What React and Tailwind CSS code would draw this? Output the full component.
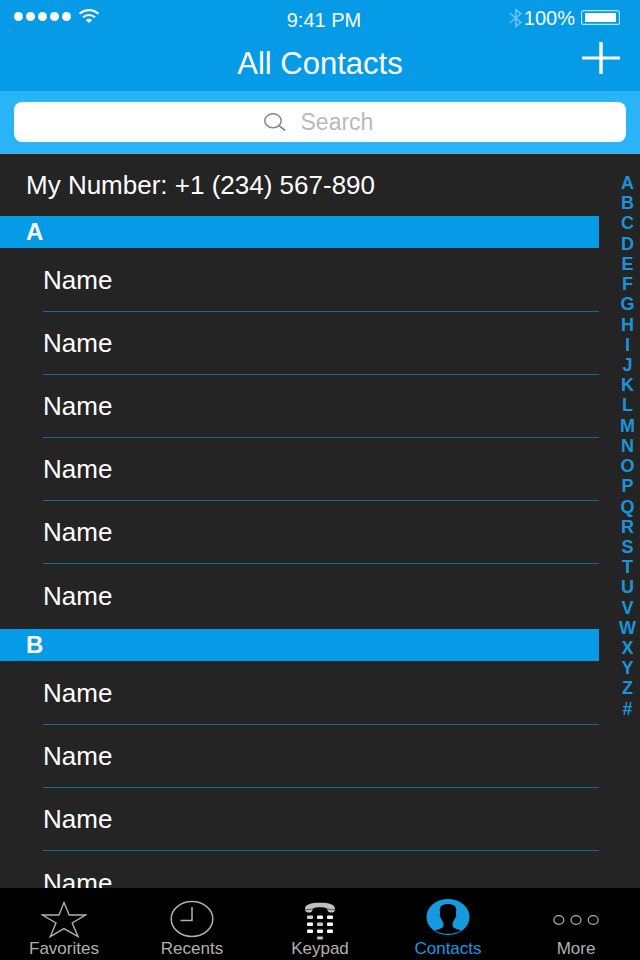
const LETTERS = "ABCDEFGHIJKLMNOPQRSTUVWXYZ#".split("");

const SECTIONS = [
  { letter: "A", contacts: ["Name", "Name", "Name", "Name", "Name", "Name"] },
  { letter: "B", contacts: ["Name", "Name", "Name", "Name"] },
];

/* ICONS */
function WifiIcon() {
  return (
    <svg width="20" height="14" viewBox="0 0 20 14" fill="none" aria-hidden="true">
      <path d="M0.6 4.8C6 -0.1 14 -0.1 19.4 4.8" stroke="currentColor" strokeWidth="2.2" />
      <path d="M4 8.3C7.4 5.2 12.6 5.2 16 8.3" stroke="currentColor" strokeWidth="2.2" />
      <path d="M6.8 11C8.6 9.2 11.4 9.2 13.2 11L10 14Z" fill="currentColor" />
    </svg>
  );
}

function BluetoothIcon() {
  return (
    <svg width="13" height="20" viewBox="0 0 13 20" fill="none" aria-hidden="true">
      <path
        d="M0.8 5.2L12 14.4L6.8 18.4V1.6L12 5.6L0.8 14.8"
        stroke="currentColor"
        strokeWidth="1.6"
      />
    </svg>
  );
}

function BatteryIcon() {
  return (
    <svg width="39" height="15" viewBox="0 0 39 15" fill="none" aria-hidden="true">
      <rect x="0.6" y="0.6" width="37.8" height="13.8" rx="2" stroke="#b3e5fc" strokeWidth="1.1" />
      <rect x="4" y="3" width="31" height="9" fill="white" />
    </svg>
  );
}

function SearchIcon() {
  return (
    <svg width="22" height="18" viewBox="0 0 22 18" fill="none" className="shrink-0" aria-hidden="true">
      <ellipse cx="9" cy="7.7" rx="8.2" ry="7" stroke="currentColor" strokeWidth="1.5" />
      <path d="M14.6 12.4L21.2 17.5" stroke="currentColor" strokeWidth="1.8" />
    </svg>
  );
}

function StarIcon() {
  return (
    <svg width="46" height="38" viewBox="0 0 46 38" fill="none" aria-hidden="true">
      <path
        d="M23 2.5L28.2 15H44.5L31.2 23L37 36.6L23 28.6L9.3 36.6L15 23L1.5 15H18Z"
        stroke="currentColor"
        strokeWidth="1.4"
      />
    </svg>
  );
}

function ClockIcon() {
  return (
    <svg width="44" height="38" viewBox="0 0 44 38" fill="none" aria-hidden="true">
      <ellipse cx="22" cy="19" rx="20.8" ry="17.4" stroke="currentColor" strokeWidth="1.5" />
      <path d="M22 7V20.5H10.5" stroke="currentColor" strokeWidth="1.5" />
    </svg>
  );
}

function KeypadIcon() {
  return (
    <svg
      width="32"
      height="38"
      viewBox="0 0 32 38"
      fill="none"
      className="overflow-visible"
      aria-hidden="true"
    >
      <path
        d="M1 8.4C1.6 4.6 6 2.8 16 2.8S30.4 4.6 31 8.4C31.3 11.4 29.6 12.6 26.8 12.6C24.2 12.6 23.4 11.4 23.2 8.6C20 6.9 12 6.9 8.8 8.6C8.6 11.4 7.8 12.6 5.2 12.6C2.4 12.6 0.7 11.4 1 8.4Z"
        fill="#c0c0c0"
      />
      <path d="M1 9.8L8.8 9.2M31 9.8L23.2 9.2" stroke="#444" strokeWidth="0.8" />
      <g fill="white">
        <rect x="3" y="15.5" width="6" height="3.4" rx="1" fill="#d0d0d0" />
        <rect x="13" y="15.5" width="6" height="3.4" rx="1" />
        <rect x="23" y="15.5" width="6" height="3.4" rx="1" />
        <rect x="3" y="22.5" width="6" height="3.4" rx="1" />
        <rect x="13" y="22.5" width="6" height="3.4" rx="1" fill="#c4c4c4" />
        <rect x="23" y="22.5" width="6" height="3.4" rx="1" />
        <rect x="3" y="29.5" width="6" height="3.4" rx="1" />
        <rect x="13" y="29.5" width="6" height="3.4" rx="1" />
        <rect x="23" y="29.5" width="6" height="3.4" rx="1" />
        <rect x="13" y="36.5" width="6" height="3" rx="1" fill="#c4c4c4" />
      </g>
    </svg>
  );
}

function PersonIcon() {
  return (
    <svg
      width="44"
      height="38"
      viewBox="0 0 44 38"
      fill="none"
      className="overflow-visible"
      aria-hidden="true"
    >
      <ellipse cx="22" cy="17" rx="21.5" ry="18" fill="currentColor" />
      <path
        d="M22 4C16.5 4 13.8 6.2 13.8 10C13.8 11.6 14.1 12.8 14 14C13.3 15.2 14 17.6 15.2 18.2C15.7 20.2 16.6 21.6 17.4 22.6V26.2C16.4 28.6 12.4 29 9 30.4C16 35 28 35 35 30.4C31.6 29 27.6 28.6 26.6 26.2V22.6C27.4 21.6 28.3 20.2 28.8 18.2C30 17.6 30.7 15.2 30 14C29.9 12.8 30.2 11.6 30.2 10C30.2 6.2 27.5 4 22 4Z"
        fill="black"
      />
    </svg>
  );
}

function MoreIcon() {
  return (
    <svg width="46" height="38" viewBox="0 0 46 38" fill="none" aria-hidden="true">
      <g stroke="currentColor" strokeWidth="1.2">
        <ellipse cx="5.8" cy="20" rx="5" ry="4.3" />
        <ellipse cx="23" cy="20" rx="5" ry="4.3" />
        <ellipse cx="40.2" cy="20" rx="5" ry="4.3" />
      </g>
    </svg>
  );
}

const TABS = [
  { label: "Favorites", icon: StarIcon },
  { label: "Recents", icon: ClockIcon },
  { label: "Keypad", icon: KeypadIcon },
  { label: "Contacts", icon: PersonIcon, active: true },
  { label: "More", icon: MoreIcon },
];

function StatusBar() {
  return (
    <div className="grid h-9 grid-cols-[1fr_auto_1fr] items-start px-3.5 pt-1 text-xl leading-6 text-white">
      <div className="flex h-6 items-center gap-2">
        <div className="flex gap-[3px]">
          {[1, 2, 3, 4, 5].map((dot) => (
            <span key={dot} className="size-[9px] rounded-full bg-white" />
          ))}
        </div>
        <WifiIcon />
      </div>
      <p className="pt-1 pl-2">9:41 PM</p>
      <div className="flex h-[27px] items-center justify-end pr-1.5">
        <span className="text-[#64c3f5]">
          <BluetoothIcon />
        </span>
        <span className="pl-0.5 pr-1.5">100%</span>
        <BatteryIcon />
      </div>
    </div>
  );
}

function ContactSection({ section }) {
  return (
    <section>
      <h2 className="h-8 bg-[#059be7] pl-[26px] text-2xl leading-8 font-bold text-white">
        {section.letter}
      </h2>
      <ul className="pt-px pb-0.5 pl-[43px]">
        {section.contacts.map((name, i) => (
          <li
            key={i}
            className="flex h-[63px] items-center border-b border-[#12699b] text-[26px] leading-8 last:border-b-0"
          >
            {name}
          </li>
        ))}
      </ul>
    </section>
  );
}

export default function App() {
  return (
    <div className="flex h-screen flex-col bg-[#242424] font-['Liberation_Sans',Arial,sans-serif] text-white">
      {/* HEADER */}
      <header className="bg-[#059be7]">
        <StatusBar />
        <div className="grid h-[55px] grid-cols-[1fr_auto_1fr] items-center px-5">
          <h1 className="col-start-2 text-[31px] leading-9">All Contacts</h1>
          <button type="button" aria-label="Add contact" className="mb-3 justify-self-end">
            <svg width="38" height="32" viewBox="0 0 38 32" aria-hidden="true">
              <path d="M0 16H38" stroke="white" strokeWidth="3" />
              <path d="M19 0V32" stroke="white" strokeWidth="3.4" />
            </svg>
          </button>
        </div>
      </header>

      {/* SEARCH */}
      <div className="border-b border-[#6fa9c6] bg-[#29b4f7] px-3.5 py-[11px]">
        <label className="flex h-10 items-center justify-center gap-[15px] rounded-lg bg-white text-[#86868b]">
          <SearchIcon />
          <input
            type="text"
            aria-label="Search"
            placeholder="Search"
            className="w-[76px] text-[23px] leading-8 text-black outline-none placeholder:text-[#b9b9bb]"
          />
        </label>
      </div>

      {/* CONTACTS */}
      <div className="flex min-h-0 flex-1">
        <main className="flex-1 overflow-y-auto [scrollbar-width:none]">
          <p className="h-[62px] pl-[26px] text-[26px] leading-[62px]">
            My Number: +1 (234) 567-890
          </p>
          {SECTIONS.map((section) => (
            <ContactSection key={section.letter} section={section} />
          ))}
        </main>

        <nav aria-label="Index" className="w-[41px] overflow-hidden pt-[19px] pl-4">
          <ol className="flex h-[546px] flex-col justify-between text-center text-lg leading-5 font-bold text-[#1a94d8]">
            {LETTERS.map((letter) => (
              <li key={letter}>
                <a href={`#${letter}`}>{letter}</a>
              </li>
            ))}
          </ol>
        </nav>
      </div>

      {/* TAB BAR */}
      <nav aria-label="Main" className="grid h-[72px] grid-cols-5 bg-black">
        {TABS.map(({ label, icon: Icon, active }) => (
          <button
            key={label}
            type="button"
            aria-current={active ? "page" : undefined}
            className={`flex flex-col items-center gap-px pt-3 text-[17px] leading-5 ${
              active ? "text-[#159ae0]" : "text-[#b0b0b0]"
            }`}
          >
            <Icon />
            {label}
          </button>
        ))}
      </nav>
    </div>
  );
}
